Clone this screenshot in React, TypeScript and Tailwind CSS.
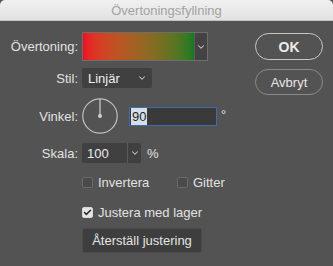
import { ChevronDown, Check } from "lucide-react";

function Chevron() {
  return <ChevronDown size={10} strokeWidth={2.5} className="text-[#c8c8c8]" />;
}

function Checkbox({ checked, label }: { checked?: boolean; label: string }) {
  return (
    <label className="flex items-center gap-[5px]">
      <span
        className={`flex h-[11px] w-[11px] items-center justify-center rounded-[2px] border ${
          checked ? "border-[#d8d8d8] bg-[#e4e4e4]" : "border-[#6a6a6a] bg-[#4a4a4a]"
        }`}
      >
        {checked && <Check size={9} strokeWidth={4} className="text-[#2a2a2a]" />}
      </span>
      <span>{label}</span>
    </label>
  );
}

export default function App() {
  return (
    <div
      className="flex h-[266px] w-[333px] flex-col overflow-hidden bg-[#535353] text-[13px] leading-none text-[#e2e2e2]"
      style={{ fontFamily: '"Liberation Sans", Arial, sans-serif' }}
    >
      <div className="flex h-[21px] shrink-0 items-center justify-center rounded-t-[5px] border-b border-[#c4c4c4] bg-gradient-to-b from-[#f0f0f0] to-[#e2e2e2] text-[#a2a2a2]">
        Övertoningsfyllning
      </div>

      <div className="flex flex-1 pt-[11px]">
        <div className="grid grid-cols-[78px_auto] content-start items-center gap-x-[4px]">
          <div className="text-right">Övertoning:</div>
          <div className="flex h-[29px] w-[126px] border border-[#6e6e6e] bg-[#434343]">
            <div className="h-full w-[111px] bg-gradient-to-r from-[#ee0a24] to-[#0c7a22]" />
            <div className="flex flex-1 items-center justify-center border-l border-[#5c5c5c]">
              <Chevron />
            </div>
          </div>

          <div className="mt-[7px] text-right">Stil:</div>
          <div className="mt-[7px] flex h-[20px] w-[70px] items-center justify-between rounded-[2px] bg-[#404040] pl-[6px] pr-[5px] text-[#f0f0f0]">
            <span>Linjär</span>
            <Chevron />
          </div>

          <div className="mt-[10px] text-right">Vinkel:</div>
          <div className="mt-[10px] flex items-center">
            <svg width="36" height="36" viewBox="0 0 36 36">
              <circle cx="18" cy="18" r="17.2" fill="none" stroke="#bdbdbd" strokeWidth="1.2" />
              <line x1="18" y1="18" x2="18" y2="1" stroke="#d0d0d0" strokeWidth="1.2" />
              <circle cx="18" cy="18" r="2" fill="#d0d0d0" />
            </svg>
            <div className="ml-[11px] flex h-[19px] w-[88px] items-center border border-[#3f6cb0] bg-[#3a3a3a] pl-[1px]">
              <span className="bg-[#d6deeb] px-[1px] py-[2px] text-[#1e1e1e]">90</span>
            </div>
            <span className="ml-[4px] -mt-[3px]">°</span>
          </div>

          <div className="mt-[9px] text-right">Skala:</div>
          <div className="mt-[9px] flex items-center">
            <div className="flex h-[20px] w-[59px] rounded-[2px] bg-[#404040]">
              <span className="flex flex-1 items-center pl-[5px] text-[#ececec]">100</span>
              <span className="flex w-[14px] items-center justify-center border-l border-[#5a5a5a]">
                <Chevron />
              </span>
            </div>
            <span className="ml-[6px]">%</span>
          </div>

          <div />
          <div className="mt-[13px] flex">
            <div className="w-[95px]">
              <Checkbox label="Invertera" />
            </div>
            <Checkbox label="Gitter" />
          </div>

          <div />
          <div className="mt-[17px]">
            <Checkbox checked label="Justera med lager" />
          </div>

          <div />
          <div className="mt-[9px]">
            <button className="h-[25px] w-[120px] rounded-[2px] border border-[#4a4a4a] bg-[#3e3e3e] text-center text-[#e4e4e4]">
              Återställ justering
            </button>
          </div>
        </div>

        <div className="ml-auto mr-[10px] mt-px flex flex-col gap-[9px]">
          <button className="h-[27px] w-[68px] rounded-full border-[1.5px] border-[#c8c8c8] text-[14px] font-bold text-[#ececec]">
            OK
          </button>
          <button className="h-[26px] w-[68px] rounded-full border border-[#8a8a8a] text-[#e6e6e6]">
            Avbryt
          </button>
        </div>
      </div>
    </div>
  );
}
